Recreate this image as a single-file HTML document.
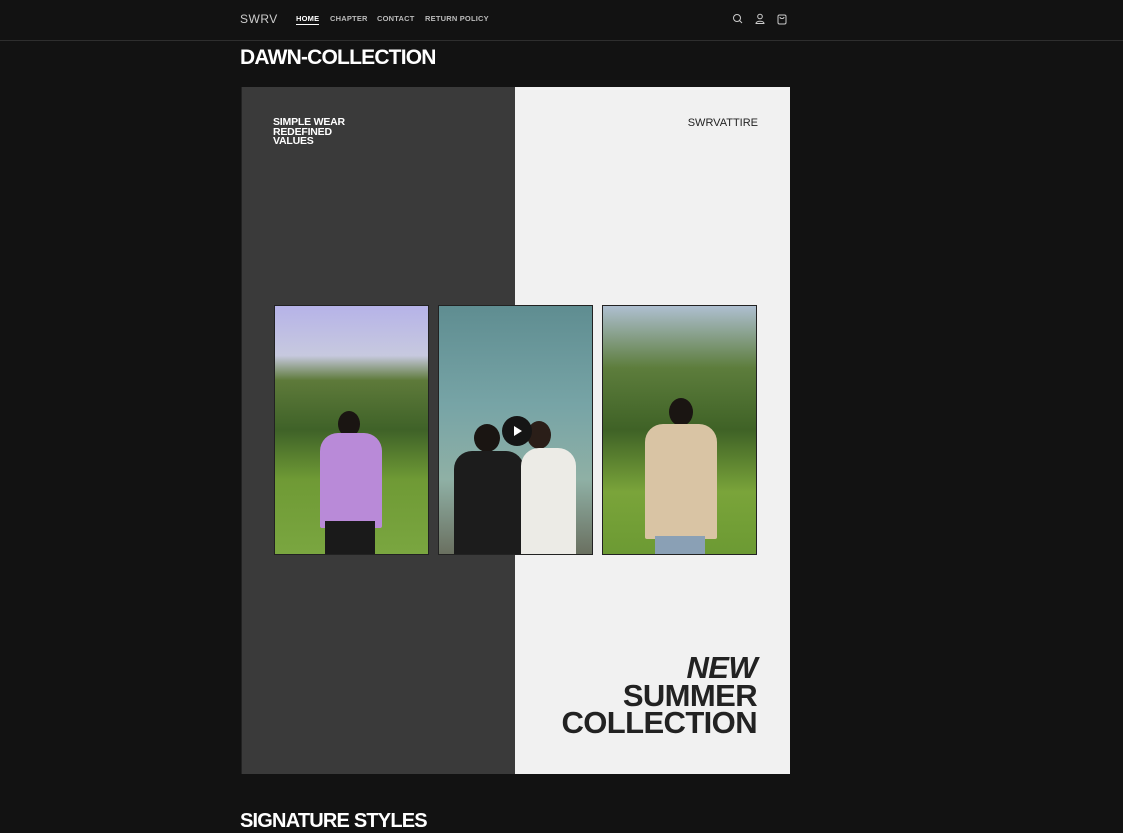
<!DOCTYPE html>
<html><head><style>
*{margin:0;padding:0;box-sizing:border-box}
body{width:1123px;height:822px;overflow:hidden;background:#121212;font-family:"Liberation Sans",sans-serif;color:#fff;position:relative}
.hdr{position:absolute;left:0;top:0;width:1123px;height:41px;border-bottom:1px solid #2e2e2e}
.logo{position:absolute;left:240px;top:12px;font-size:12px;color:#ccc;letter-spacing:.5px}
.nav{position:absolute;top:14px;font-size:7.5px;font-weight:bold;color:#bbb;letter-spacing:.2px}
h1{position:absolute;left:240px;top:46px;font-size:21px;font-weight:bold;letter-spacing:-.8px}
.box{position:absolute;left:241px;top:87px;width:549px;height:687px;background:#f1f1f1}
.dark{position:absolute;left:0;top:0;width:274px;height:687px;background:#3a3a3a;border-left:1px solid #222}
.ph{position:absolute;top:218px;width:155px;height:250px;border:1px solid #222;overflow:hidden}
.sky{position:absolute;left:0;top:0;width:100%;height:100%}
.fig{position:absolute;border-radius:18px 18px 2px 2px}
.head{position:absolute;border-radius:50%;background:#1a1512}
</style></head><body>
<div class="hdr">
<div class="logo">SWRV</div>
<div class="nav" style="left:296px;color:#fff;border-bottom:1px solid #fff;padding-bottom:1px">HOME</div>
<div class="nav" style="left:330px">CHAPTER</div>
<div class="nav" style="left:377px">CONTACT</div>
<div class="nav" style="left:425px">RETURN POLICY</div>
<svg style="position:absolute;left:732px;top:13px" width="60" height="12" viewBox="0 0 60 12" fill="none" stroke="#ccc" stroke-width="1">
<circle cx="5" cy="5" r="3.5"/><path d="M7.5 7.5L10 10"/>
<circle cx="28" cy="3.5" r="2.3"/><path d="M24 10.5c0-3 8-3 8 0z"/>
<rect x="46" y="2" width="8" height="9" rx="1.5"/><path d="M48 4c0 2 4 2 4 0"/>
</svg>
</div>
<h1>DAWN-COLLECTION</h1>
<div class="box">
<div class="dark"></div>
<div style="position:absolute;left:32px;top:31px;font-size:10.5px;font-weight:bold;line-height:9.5px;letter-spacing:-.2px">SIMPLE WEAR<br>REDEFINED<br>VALUES</div>
<div style="position:absolute;right:32px;top:30px;font-size:11px;color:#222">SWRVATTIRE</div>
<div class="ph" style="left:33px"><div class="sky" style="background:linear-gradient(#b6b3e8 0%,#c7c9df 20%,#5e7a3a 30%,#3f6228 50%,#6f9a35 70%,#7aa640 100%)"></div>
<div class="head" style="left:63px;top:105px;width:22px;height:26px"></div>
<div class="fig" style="left:45px;top:127px;width:62px;height:95px;background:#b98ad8"></div>
<div class="fig" style="left:50px;top:215px;width:50px;height:40px;background:#1a1a1a;border-radius:0"></div></div>
<div class="ph" style="left:197px"><div class="sky" style="background:linear-gradient(#5f8d91 0%,#77a4a6 40%,#8fb0a5 70%,#6a7060 100%)"></div>
<div class="head" style="left:35px;top:118px;width:26px;height:28px"></div>
<div class="fig" style="left:15px;top:145px;width:70px;height:110px;background:#1c1c1c"></div>
<div class="head" style="left:88px;top:115px;width:24px;height:28px;background:#2a1e18"></div>
<div class="fig" style="left:82px;top:142px;width:55px;height:110px;background:#ecebe6"></div>
<div style="position:absolute;left:63px;top:110px;width:30px;height:30px;border-radius:50%;background:#151515"></div>
<div style="position:absolute;left:75px;top:120px;width:0;height:0;border-left:8px solid #fff;border-top:5px solid transparent;border-bottom:5px solid transparent"></div></div>
<div class="ph" style="left:361px"><div class="sky" style="background:linear-gradient(#aebfd0 0%,#5d7d3c 25%,#3f6226 50%,#7aa43a 75%,#6c9a33 100%)"></div>
<div class="head" style="left:66px;top:92px;width:24px;height:28px"></div>
<div class="fig" style="left:42px;top:118px;width:72px;height:115px;background:#d9c4a4"></div>
<div class="fig" style="left:52px;top:230px;width:50px;height:25px;background:#8aa0b5;border-radius:0"></div></div>
<div style="position:absolute;right:33px;top:567px;text-align:right;color:#222;font-size:31px;font-weight:bold;line-height:27.5px;letter-spacing:-.6px"><i>NEW</i><br>SUMMER<br>COLLECTION</div>
</div>
<div style="position:absolute;left:240px;top:810px;font-size:20px;font-weight:bold;letter-spacing:-.8px">SIGNATURE STYLES</div>
</body></html>
